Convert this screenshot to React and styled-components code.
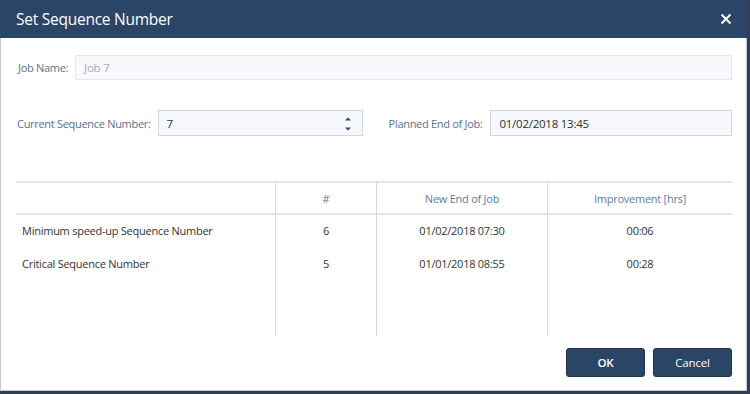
import styled, { createGlobalStyle } from "styled-components";

const Global = createGlobalStyle`
  html, body {
    margin: 0;
    padding: 0;
    background: #2f3f55;
  }
  body {
    font-family: "Open Sans", "Noto Sans", sans-serif;
  }
`;

// ダイアログ全体
const Dialog = styled.div`
  width: 747px;
  height: 391px;
  background: #fff;
  border-left: 1px solid #c4c8ce;
  border-right: 1px solid #c4c8ce;
  border-bottom: 1px solid #c4c8ce;
  box-sizing: border-box;
  display: flex;
  flex-direction: column;
`;

const Header = styled.div`
  height: 38px;
  background: #2b4566;
  display: flex;
  align-items: center;
  justify-content: space-between;
  padding: 0 14px 0 16px;
  margin-left: -1px;
  margin-right: -1px;
  color: #fff;
`;

const Title = styled.div`
  font-size: 15.5px;
  letter-spacing: -0.25px;
`;

const Close = styled.button`
  background: none;
  border: none;
  padding: 0;
  width: 14px;
  height: 14px;
  display: flex;
  align-items: center;
  justify-content: center;
  cursor: pointer;
`;

const Body = styled.div`
  flex: 1;
  display: flex;
  flex-direction: column;
  padding: 17px 14px 0 15px;
`;

const Row = styled.div`
  display: flex;
  align-items: center;
  gap: 7px;
  margin-bottom: ${(p) => p.$mb || 0}px;
`;

const Label = styled.label`
  font-size: 11px;
  letter-spacing: -0.3px;
  color: #5b7292;
  white-space: nowrap;
  margin-left: ${(p) => p.$ml || 0}px;
`;

const Input = styled.div`
  flex: ${(p) => (p.$w ? "none" : 1)};
  width: ${(p) => (p.$w ? `${p.$w}px` : "auto")};
  height: ${(p) => (p.$disabled ? 25 : 26)}px;
  box-sizing: border-box;
  border: 1px solid ${(p) => (p.$disabled ? "#e3e9f1" : "#ccd8e6")};
  background: ${(p) => (p.$disabled ? "#f7f9fc" : "#f6f8fb")};
  display: flex;
  align-items: center;
  padding: 0 8px;
  font-size: 11.5px;
  letter-spacing: -0.25px;
  color: ${(p) => (p.$disabled ? "#a7adb6" : "#2b2f36")};
  position: relative;
`;

const Spin = styled.div`
  position: absolute;
  right: 11px;
  top: 6px;
  display: flex;
  flex-direction: column;
  gap: 6px;
`;

const Table = styled.div`
  margin-top: 45px;
  height: 153px;
  display: grid;
  grid-template-columns: 259px 101px 171px 1fr;
  grid-template-rows: 32px 31px 34px 1fr;
  border-top: 2px solid #dde6f1;
`;

const Cell = styled.div`
  display: flex;
  align-items: center;
  justify-content: ${(p) => (p.$left ? "flex-start" : "center")};
  padding-left: ${(p) => (p.$left ? 6 : 0)}px;
  font-size: 11px;
  letter-spacing: -0.25px;
  color: ${(p) => (p.$head ? "#5d7ca3" : "#333")};
  border-left: ${(p) => (p.$first ? "none" : "1px solid #cbd8e7")};
  border-bottom: ${(p) => (p.$head ? "2px solid #dde6f1" : "none")};
`;

const Footer = styled.div`
  display: flex;
  justify-content: flex-end;
  gap: 8px;
  padding: 12px 0 0;
`;

const Button = styled.button`
  width: 79px;
  height: 29px;
  background: #2b4566;
  border: 1px solid #1f3450;
  border-radius: 3px;
  color: #fff;
  font-family: "Open Sans", "Noto Sans", sans-serif;
  font-size: 11.5px;
  letter-spacing: -0.2px;
  font-weight: ${(p) => (p.$primary ? 600 : 400)};
  cursor: pointer;
`;

const rows = [
  ["Minimum speed-up Sequence Number", "6", "01/02/2018 07:30", "00:06"],
  ["Critical Sequence Number", "5", "01/01/2018 08:55", "00:28"],
];

const App = () => {
  return (
    <>
      <Global />
      <Dialog>
        <Header>
          <Title>Set Sequence Number</Title>
          <Close aria-label="close">
            <svg width="12" height="12" viewBox="0 0 12 12">
              <path d="M1.5 1.5 L10.5 10.5 M10.5 1.5 L1.5 10.5" stroke="#fff" strokeWidth="2" />
            </svg>
          </Close>
        </Header>
        <Body>
          <Row $mb={30}>
            <Label $ml={2}>Job Name:</Label>
            <Input $disabled>Job 7</Input>
          </Row>
          <Row>
            <Label $ml={1}>Current Sequence Number:</Label>
            <Input $w={205}>
              7
              <Spin>
                <svg width="6" height="4" viewBox="0 0 6 4"><path d="M0 3.5 L3 0.5 L6 3.5Z" fill="#34465e" /></svg>
                <svg width="6" height="4" viewBox="0 0 6 4"><path d="M0 0.5 L3 3.5 L6 0.5Z" fill="#34465e" /></svg>
              </Spin>
            </Input>
            <Label $ml={19}>Planned End of Job:</Label>
            <Input style={{ marginLeft: 1 }}>01/02/2018 13:45</Input>
          </Row>
          <Table>
            <Cell $head $first />
            <Cell $head>#</Cell>
            <Cell $head>New End of Job</Cell>
            <Cell $head>Improvement [hrs]</Cell>
            {rows.map((r) => (
              <>
                <Cell $first $left>{r[0]}</Cell>
                <Cell>{r[1]}</Cell>
                <Cell>{r[2]}</Cell>
                <Cell>{r[3]}</Cell>
              </>
            ))}
            <Cell $first />
            <Cell />
            <Cell />
            <Cell />
          </Table>
          <Footer>
            <Button $primary>OK</Button>
            <Button>Cancel</Button>
          </Footer>
        </Body>
      </Dialog>
    </>
  );
};

export default App;
